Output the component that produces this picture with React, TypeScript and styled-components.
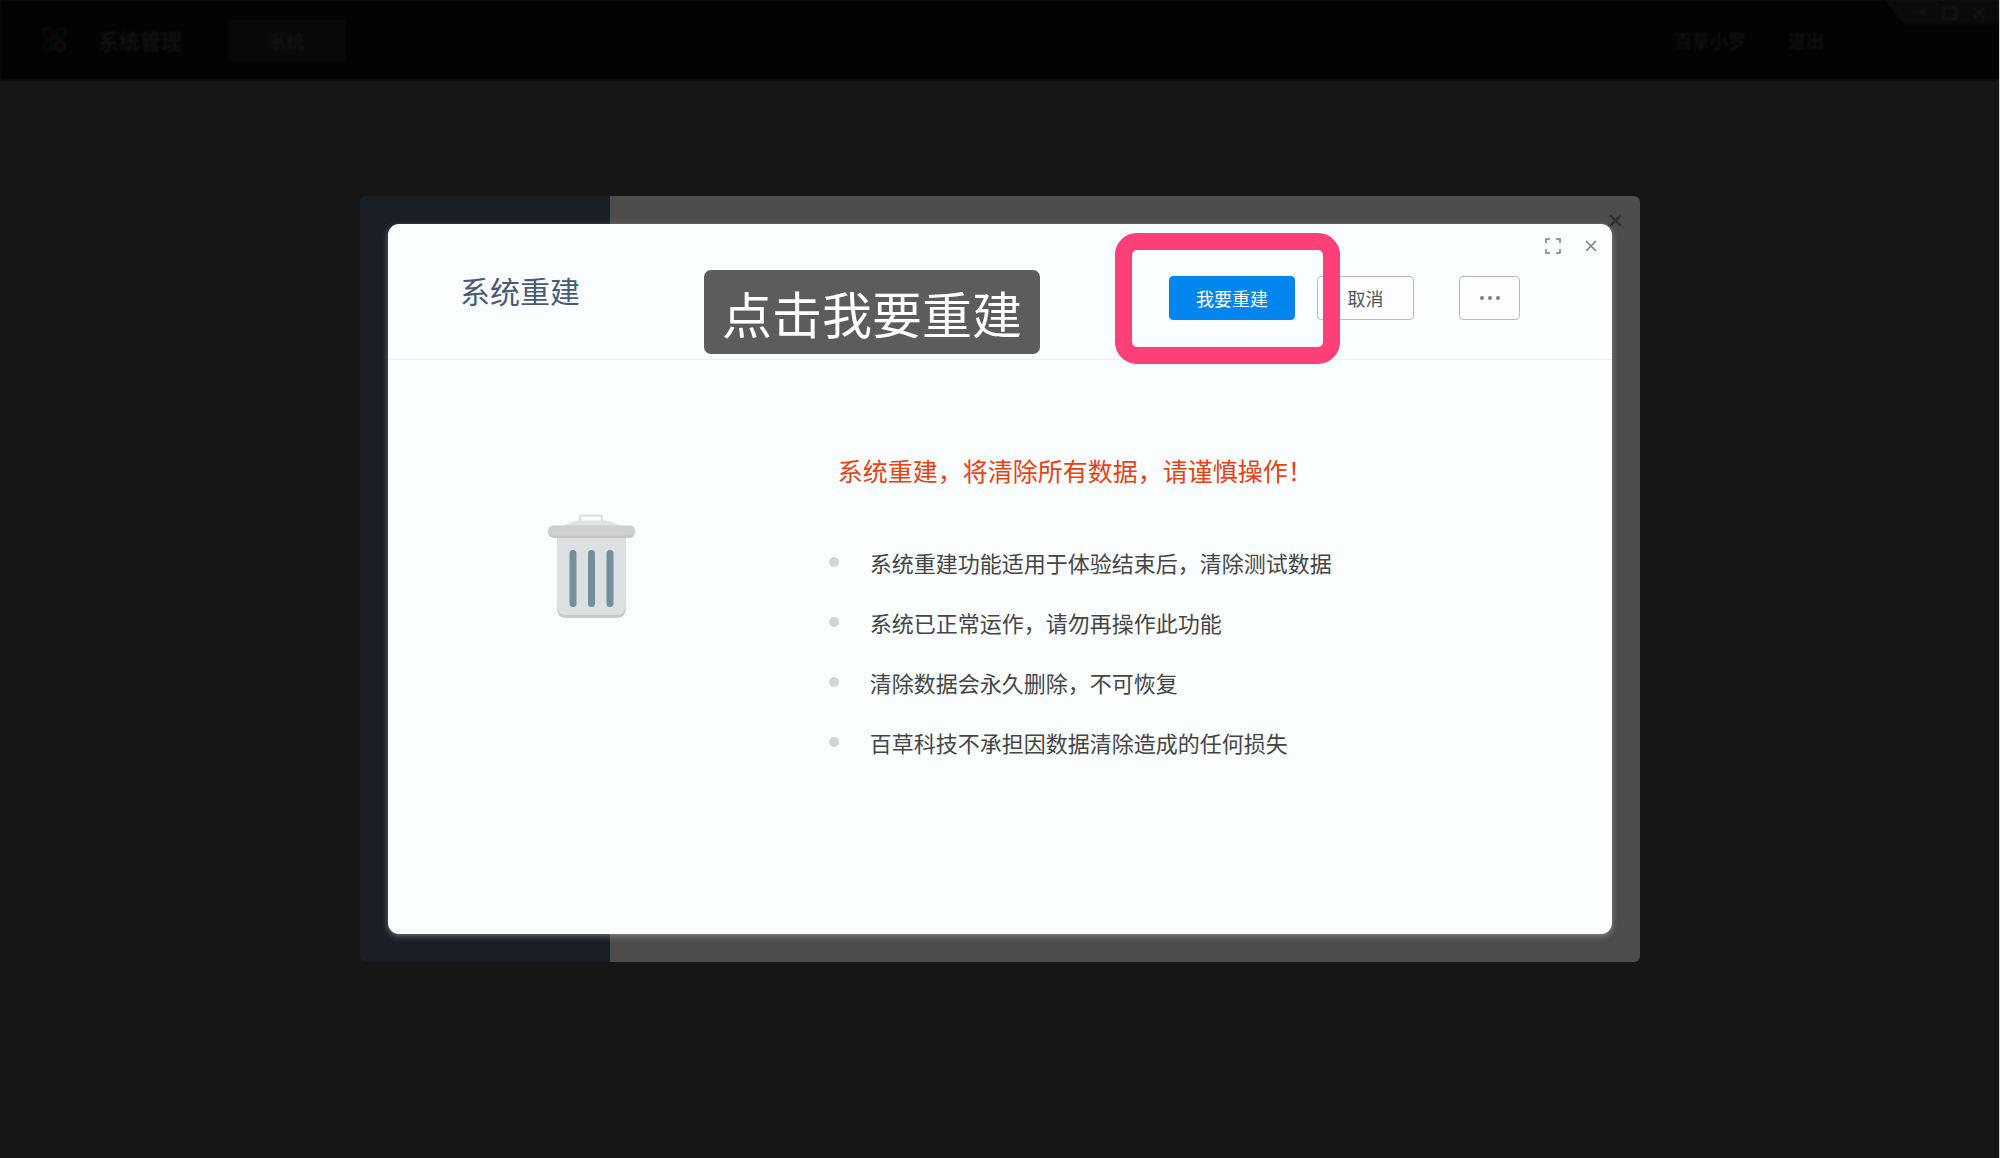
import React from "react";
import styled, { createGlobalStyle } from "styled-components";

const GlobalStyle = createGlobalStyle`
  *, *::before, *::after { box-sizing: border-box; }
  body {
    margin: 0;
    background: #161616;
    font-family: "Noto Sans CJK SC", "Liberation Sans", sans-serif;
  }
  h1, h2, p, ul { margin: 0; padding: 0; font-weight: 400; }
  button { font-family: inherit; padding: 0; margin: 0; cursor: pointer; }
`;

const Page = styled.div`
  min-height: 100vh;
  overflow: hidden;
  border-right: 1px solid #d0d0d0;
`;

const TopBar = styled.header`
  position: relative;
  display: flex;
  align-items: center;
  height: 80px;
  padding: 0 175px 0 41px;
  background: #030303;
  color: #131313;
  filter: blur(1px);
`;

const Brand = styled.div`
  display: flex;
  align-items: center;
  gap: 31px;
  margin-right: 46px;
  font-size: 21px;
  font-weight: 500;
  line-height: 24px;
`;

const TopTab = styled.button`
  width: 117px;
  height: 41px;
  border: 0;
  background: #090909;
  color: #141414;
  font-size: 18px;
  font-weight: 500;
`;

const Account = styled.nav`
  display: flex;
  gap: 42px;
  margin-left: auto;
`;

const AccountLink = styled.a`
  color: #121212;
  font-size: 18px;
  font-weight: 500;
  line-height: 24px;
  text-decoration: none;
`;

const WindowControls = styled.div`
  position: absolute;
  top: 0;
  right: 0;
  display: flex;
  align-items: center;
  gap: 16px;
  height: 24px;
  padding: 2px 14px 0 28px;
  background: #0a0a0a;
  color: #161616;
  clip-path: polygon(0 0, 100% 0, 100% 100%, 20px 100%);
`;

const IconButton = styled.button`
  display: flex;
  border: 0;
  background: none;
  color: inherit;
`;

const Overlay = styled.div`
  position: fixed;
  inset: 0;
  display: flex;
  align-items: center;
  justify-content: center;
`;

const SettingsWindow = styled.section`
  position: relative;
  width: 64vw;
  padding: 28px;
  border-radius: 6px;
  background: linear-gradient(90deg, #1a1e25 250px, #4d4d4d 250px);
`;

const SettingsClose = styled(IconButton)`
  position: absolute;
  top: 18px;
  right: 18px;
  color: #303030;
`;

const Dialog = styled.section`
  position: relative;
  border-radius: 11px;
  background: #fbfeff;
  box-shadow: 0 2px 6px rgba(190, 190, 190, 0.5);
`;

const DialogTools = styled.div`
  position: absolute;
  top: 14px;
  right: 15px;
  display: flex;
  align-items: center;
  gap: 24px;
  color: #7c7c7c;
`;

const DialogHeader = styled.div`
  display: flex;
  align-items: flex-start;
  justify-content: space-between;
  padding: 52px 92px 39px 72px;
  border-bottom: 1px solid #ecedef;
`;

const Title = styled.h1`
  color: #4a5b76;
  font-size: 30px;
  line-height: 28px;
`;

const Actions = styled.div`
  display: flex;
  gap: 22px;
`;

const ActionButton = styled.button<{ $width: number; $primary?: boolean }>`
  display: flex;
  align-items: center;
  justify-content: center;
  width: ${(p) => p.$width}px;
  height: 44px;
  border: 1px solid ${(p) => (p.$primary ? "#0086ee" : "#b9babc")};
  border-radius: 4px;
  background: ${(p) => (p.$primary ? "#0086ee" : "#fdfeff")};
  color: ${(p) => (p.$primary ? "#ffffff" : "#555555")};
  font-size: 18px;
  line-height: 24px;
`;

const MoreSlot = styled.div`
  margin-left: 23px;
`;

const GuideTarget = styled.div`
  position: relative;
  z-index: 1;
`;

const GuideFrame = styled.div`
  position: absolute;
  inset: -43px -45px -44px -54px;
  border: 17px solid #ff3f78;
  border-radius: 22px;
  pointer-events: none;
`;

const GuideTip = styled.div`
  position: absolute;
  top: -6px;
  right: calc(100% + 129px);
  padding: 0 18px;
  border-radius: 7px;
  background: #5c5c5c;
  color: #ffffff;
  font-size: 50px;
  line-height: 84px;
  white-space: nowrap;
`;

const DialogBody = styled.div`
  display: grid;
  grid-template-columns: 36% 1fr;
  padding: 94px 0 162px;
`;

const Illustration = styled.div`
  display: flex;
  justify-content: center;
  padding: 60px 34px 0 0;
`;

const Warning = styled.h2`
  margin-bottom: 46px;
  padding-left: 9px;
  color: #ea3f12;
  font-size: 25px;
  line-height: 32px;
`;

const Notes = styled.ul`
  list-style: none;
`;

const Note = styled.li`
  display: flex;
  align-items: center;
  gap: 31px;
  color: #454545;
  font-size: 22px;
  line-height: 60px;

  &::before {
    content: "";
    width: 10px;
    height: 10px;
    border-radius: 50%;
    background: #d3d4d6;
  }
`;

const notes = [
  "系统重建功能适用于体验结束后，清除测试数据",
  "系统已正常运作，请勿再操作此功能",
  "清除数据会永久删除，不可恢复",
  "百草科技不承担因数据清除造成的任何损失",
];

const Logo = () => (
  <svg width="26" height="26" viewBox="0 0 26 26" fill="none" strokeWidth="3" aria-hidden="true">
    <path d="M2 2h5a4.500 4.500 0 0 1 4.500 4.500v5H6.500A4.500 4.500 0 0 1 2 7z" stroke="#0e0805" />
    <path d="M24 2h-5a4.500 4.500 0 0 0-4.500 4.500v5h5A4.500 4.500 0 0 0 24 7z" stroke="#050c07" />
    <circle cx="7" cy="19" r="4.500" stroke="#050b10" />
    <circle cx="19" cy="19" r="4.500" stroke="#110e04" />
  </svg>
);

const Cross = ({ size, weight }: { size: number; weight: number }) => (
  <svg width={size} height={size} viewBox="0 0 12 12" stroke="currentColor" strokeWidth={weight} aria-hidden="true">
    <path d="M1 1 11 11M11 1 1 11" />
  </svg>
);

const Expand = () => (
  <svg width="16" height="16" viewBox="0 0 16 16" fill="none" stroke="currentColor" strokeWidth="1.500" aria-hidden="true">
    <path d="M1 5V1H5M11 1h4v4M15 11v4h-4M5 15H1v-4" />
  </svg>
);

const Dots = () => (
  <svg width="22" height="6" viewBox="0 0 22 6" fill="#777" aria-hidden="true">
    <circle cx="3" cy="3" r="1.900" />
    <circle cx="11" cy="3" r="1.900" />
    <circle cx="19" cy="3" r="1.900" />
  </svg>
);

const TrashCan = () => (
  <svg width="87" height="104" viewBox="0 0 87 104" role="img" aria-label="垃圾桶">
    <path d="M32 8V4q0-2.500 2.500-2.500h17q2.500 0 2.500 2.500v4" fill="none" stroke="#dcdfdf" strokeWidth="2.200" />
    <path d="M12 13 24 8q3-1.500 6-1.500h27q3 0 6 1.500l13 5z" fill="#dfe2e2" />
    <path d="M9 20H78V94q0 10-10 10H19Q9 104 9 94z" fill="#c6c9ca" />
    <path d="M9 20H78V91q0 10-10 10H19Q9 101 9 91z" fill="#dce0e0" />
    <rect y="12" width="87" height="12" rx="6" fill="#c3c5c6" />
    <rect y="11.500" width="87" height="10" rx="5" fill="#cdcfd0" />
    <g fill="#718f9d">
      <rect x="21.500" y="36" width="7" height="57" rx="3.500" />
      <rect x="40" y="36" width="7" height="57" rx="3.500" />
      <rect x="58.500" y="36" width="7" height="57" rx="3.500" />
    </g>
  </svg>
);

export default function App() {
  return (
    <Page>
      <GlobalStyle />
      <TopBar>
        <Brand>
          <Logo />
          系统管理
        </Brand>
        <TopTab type="button">系统</TopTab>
        <Account>
          <AccountLink href="#account">百草小罗</AccountLink>
          <AccountLink href="#logout">退出</AccountLink>
        </Account>
        <WindowControls>
          <IconButton type="button" aria-label="最小化">
            <svg width="14" height="14" viewBox="0 0 14 14" stroke="currentColor" strokeWidth="2" aria-hidden="true">
              <path d="M0 6H14" />
            </svg>
          </IconButton>
          <IconButton type="button" aria-label="最大化">
            <svg width="15" height="14" viewBox="0 0 15 14" fill="none" stroke="currentColor" strokeWidth="2" aria-hidden="true">
              <rect x="1" y="2" width="13" height="11" rx="1" />
            </svg>
          </IconButton>
          <IconButton type="button" aria-label="关闭">
            <Cross size={12} weight={2} />
          </IconButton>
        </WindowControls>
      </TopBar>

      <Overlay>
        <SettingsWindow aria-label="系统">
          <SettingsClose type="button" aria-label="关闭">
            <Cross size={13} weight={2.5} />
          </SettingsClose>
          <Dialog role="dialog" aria-labelledby="rebuild-title">
            <DialogHeader>
              <Title id="rebuild-title">系统重建</Title>
              <Actions>
                <GuideTarget>
                  <ActionButton type="button" $width={126} $primary>
                    我要重建
                  </ActionButton>
                  <GuideFrame />
                  <GuideTip role="tooltip">点击我要重建</GuideTip>
                </GuideTarget>
                <ActionButton type="button" $width={97}>
                  取消
                </ActionButton>
                <MoreSlot>
                  <ActionButton type="button" $width={61} aria-label="更多">
                    <Dots />
                  </ActionButton>
                </MoreSlot>
              </Actions>
            </DialogHeader>
            <DialogTools>
              <IconButton type="button" aria-label="全屏">
                <Expand />
              </IconButton>
              <IconButton type="button" aria-label="关闭">
                <Cross size={12} weight={1.5} />
              </IconButton>
            </DialogTools>
            <DialogBody>
              <Illustration>
                <TrashCan />
              </Illustration>
              <div>
                <Warning>系统重建，将清除所有数据，请谨慎操作！</Warning>
                <Notes>
                  {notes.map((text) => (
                    <Note key={text}>{text}</Note>
                  ))}
                </Notes>
              </div>
            </DialogBody>
          </Dialog>
        </SettingsWindow>
      </Overlay>
    </Page>
  );
}
